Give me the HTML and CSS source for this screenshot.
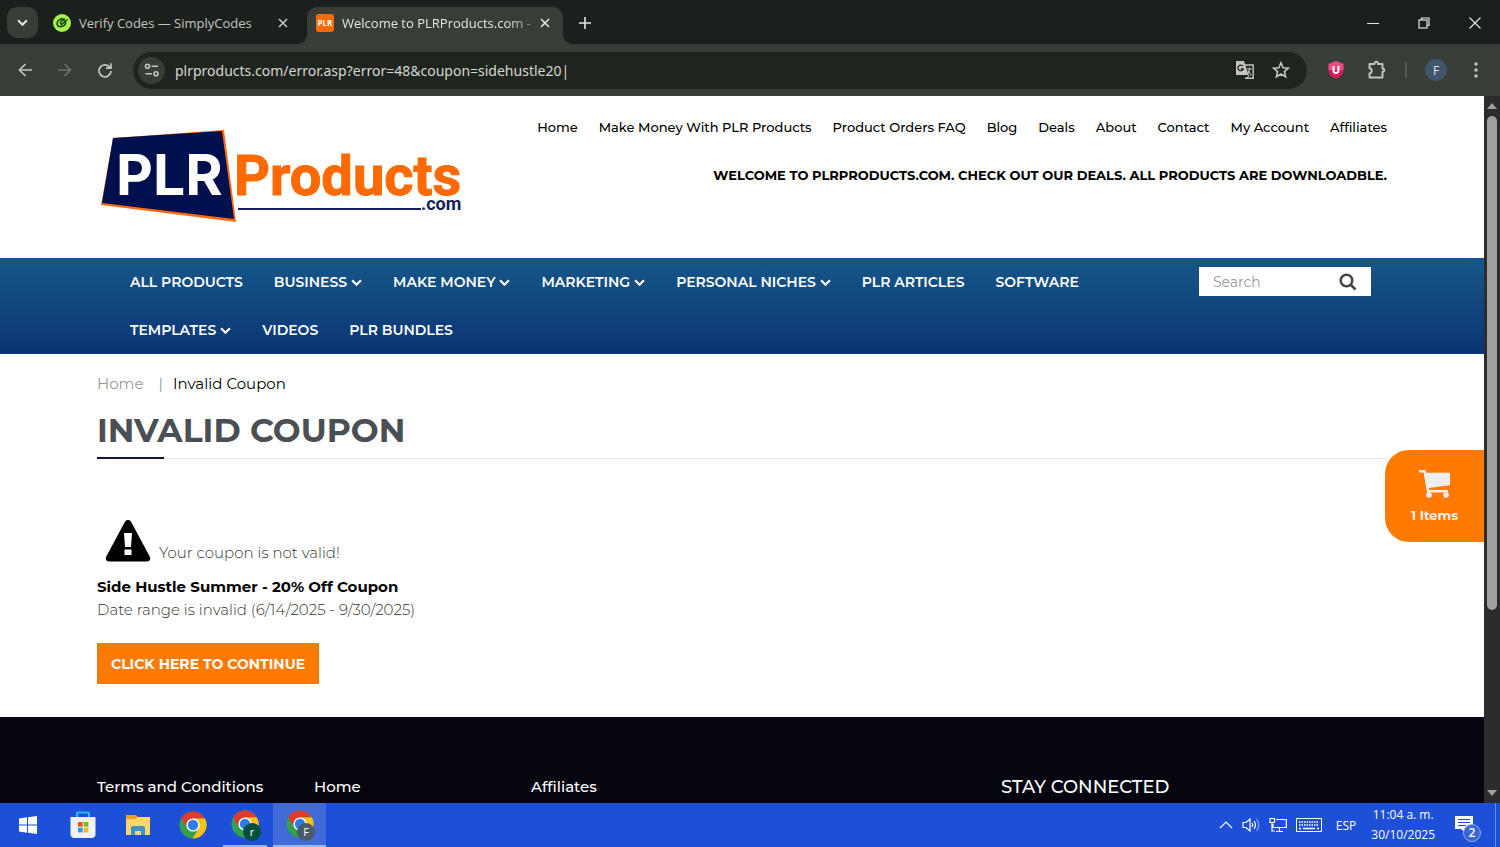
FILE: index.html
```html
<!DOCTYPE html>
<html lang="en">
<head>
    <meta charset="UTF-8">
    <meta name="viewport" content="width=device-width, initial-scale=1.0">
    <title>Welcome to PLRProducts.com</title>
    <link rel="stylesheet" href="styles.css">
</head>
<body>
    <!-- shared shapes -->
    <svg class="defs" width="0" height="0" aria-hidden="true">
        <symbol id="chevron" viewBox="0 0 10 8">
            <path d="M1 2l4 4 4-4" fill="none" stroke="currentColor" stroke-width="2"/>
        </symbol>
        <symbol id="close" viewBox="0 0 12 12">
            <path d="M2 2l8 8M10 2l-8 8" fill="none" stroke="currentColor" stroke-width="1.6"/>
        </symbol>
        <symbol id="chrome" viewBox="0 0 28 28">
            <circle cx="14" cy="14" r="13.5" fill="#34a24c"/>
            <path d="M2.3 7.3A13.5 13.5 0 0 1 25.7 7.3L14 7.6 8.2 17.3z" fill="#de3a2e"/>
            <path d="M14 7.6h11.9A13.5 13.5 0 0 1 13.6 27.5L19.8 17.3z" fill="#fbc116"/>
            <circle cx="14" cy="14" r="6.6" fill="#fff"/>
            <circle cx="14" cy="14" r="5.2" fill="#2f7de9"/>
        </symbol>
    </svg>

    <div class="tab-strip">
        <button class="tab-search" aria-label="Search tabs"><svg width="11" height="9"><use href="#chevron"/></svg></button>
        <div class="tab">
            <svg class="favicon" viewBox="0 0 18 18">
                <circle cx="9" cy="9" r="9" fill="#a3f34b"/>
                <path d="M12 5.500C8 3.500 4 6.500 4 9.500c0 3 3 3.800 5.500 2.800 2-.8 3.300-2.800 3-4.300M7 9l1.500 1.500L14.500 5.500M7 9c1-2 3-3 4.500-2.500" fill="none" stroke="#1b3a12" stroke-width="1.500"/>
            </svg>
            <span class="tab-title">Verify Codes — SimplyCodes</span>
            <button class="tab-close" aria-label="Close tab"><svg width="12" height="12"><use href="#close"/></svg></button>
        </div>
        <div class="tab tab-active">
            <span class="favicon favicon-plr">PLR</span>
            <span class="tab-title tab-fade">Welcome to PLRProducts.com -</span>
            <button class="tab-close" aria-label="Close tab"><svg width="12" height="12"><use href="#close"/></svg></button>
        </div>
        <button class="new-tab" aria-label="New tab"><svg width="12" height="12" viewBox="0 0 12 12"><path d="M6 0v12M0 6h12" stroke="currentColor" stroke-width="1.600"/></svg></button>
        <div class="window-buttons">
            <button aria-label="Minimize"><svg width="12" height="12" viewBox="0 0 12 12"><path d="M0 6.500h12" stroke="currentColor"/></svg></button>
            <button aria-label="Restore"><svg width="12" height="12" viewBox="0 0 12 12" fill="none" stroke="currentColor" stroke-width="1.200"><rect x="1" y="3" width="8" height="8"/><path d="M3.500 3V1H11v7.500H9"/></svg></button>
            <button aria-label="Close"><svg width="12" height="12" viewBox="0 0 12 12"><path d="M.5.500l11 11M11.500.500l-11 11" stroke="currentColor" stroke-width="1.200"/></svg></button>
        </div>
    </div>

    <div class="toolbar">
        <button aria-label="Back"><svg width="14" height="14" viewBox="0 0 14 14" fill="none" stroke="currentColor" stroke-width="1.700"><path d="M14 7H1.500M7.500 1L1.500 7l6 6"/></svg></button>
        <button class="disabled" aria-label="Forward"><svg width="14" height="14" viewBox="0 0 14 14" fill="none" stroke="currentColor" stroke-width="1.700"><path d="M0 7h12.500M6.500 1l6 6-6 6"/></svg></button>
        <button aria-label="Reload"><svg width="16" height="16" viewBox="0 0 16 16" fill="none" stroke="currentColor" stroke-width="1.700"><path d="M13 5.500A6 6 0 1 0 14 9M14 1.200v5H9"/></svg></button>
        <div class="omnibox">
            <button class="site-info" aria-label="Site information">
                <svg width="16" height="14" viewBox="0 0 16 14" fill="none" stroke="currentColor" stroke-width="1.600"><circle cx="3.500" cy="3.300" r="2"/><path d="M7.500 3.300H14M1.500 10.700H8"/><circle cx="12" cy="10.700" r="2"/></svg>
            </button>
            <span class="url"><label class="sr-only" for="address">Address</label><input id="address" type="text" value="plrproducts.com/error.asp?error=48&amp;coupon=sidehustle20|"></span>
            <button aria-label="Translate">
                <svg width="20" height="20" viewBox="0 0 20 20"><path d="M9 5h9.200v13.300H10" fill="none" stroke="#c3c6c0" stroke-width="1.400"/><path d="M1 1h8l4.500 14H1z" fill="#c3c6c0"/><path d="M8 6.200A2.800 2.800 0 1 0 8.300 9H5.800" fill="none" stroke="#20241f" stroke-width="1.300"/><path d="M12 9h5M14.500 7.500V9c0 2-1 4-2 5M13 11l3.500 4.500M14 15l-2 3.500" fill="none" stroke="#c3c6c0" stroke-width="1.100"/></svg>
            </button>
            <button aria-label="Bookmark this tab">
                <svg width="18" height="18" viewBox="0 0 18 18"><path d="M9 1.800l2.100 4.900 5.300.4-4 3.500 1.200 5.200L9 13l-4.600 2.800 1.200-5.200-4-3.500 5.300-.4z" fill="none" stroke="currentColor" stroke-width="1.600"/></svg>
            </button>
        </div>
        <div class="extensions">
            <button class="blocker" aria-label="uBlock">
                <svg width="16" height="18" viewBox="0 0 16 18"><path d="M8 0l7.500 3v6c0 4-3 7-7.500 9C3.500 16 .5 13 .5 9V3z" fill="#d81b60"/><path d="M8 0l7.500 3v6H.5V3z" fill="#f06292" opacity=".7"/><path d="M5.500 5v4.500a2.500 2.500 0 0 0 5 0V5" fill="none" stroke="#fff" stroke-width="1.900"/></svg>
            </button>
            <button aria-label="Extensions">
                <svg width="20" height="20" viewBox="0 0 20 20" fill="none" stroke="currentColor" stroke-width="1.900" stroke-linejoin="round"><path d="M2.500 4h5c0-3 3.500-3 3.500 0h4.500v4.500c2.500.3 2.500 3 0 3.300v5.700h-13v-4c3-.3 3-5 0-5.300z"/></svg>
            </button>
            <span class="divider"></span>
            <button class="profile" aria-label="Profile">F</button>
            <button aria-label="Menu"><svg width="4" height="16" viewBox="0 0 4 16" fill="currentColor"><circle cx="2" cy="2" r="1.700"/><circle cx="2" cy="8" r="1.700"/><circle cx="2" cy="14" r="1.700"/></svg></button>
        </div>
    </div>

    <div class="viewport">
        <div class="site">
            <header class="container site-header">
                <a class="logo" href="#" aria-label="PLR Products">
                    <svg width="364" height="94" viewBox="0 0 364 94">
                        <path d="M12 9L123 1l12 92L0 76z" fill="#ff6a13"/>
                        <path d="M12 9L121 2l12 88L1 74z" fill="#00104f"/>
                        <text class="logo-plr" x="15" y="66">PLR</text>
                        <text class="logo-products" x="133" y="66">Products</text>
                        <path d="M137 80h183" stroke="#14205c" stroke-width="2"/>
                        <text class="logo-com" x="320" y="81">.com</text>
                    </svg>
                </a>
                <div class="header-right">
                    <nav class="top-links">
                        <a href="#">Home</a>
                        <a href="#">Make Money With PLR Products</a>
                        <a href="#">Product Orders FAQ</a>
                        <a href="#">Blog</a>
                        <a href="#">Deals</a>
                        <a href="#">About</a>
                        <a href="#">Contact</a>
                        <a href="#">My Account</a>
                        <a href="#">Affiliates</a>
                    </nav>
                    <p class="welcome">WELCOME TO PLRPRODUCTS.COM. CHECK OUT OUR DEALS. ALL PRODUCTS ARE DOWNLOADBLE.</p>
                </div>
            </header>

            <div class="main-nav">
                <div class="container nav-inner">
                    <nav class="categories">
                        <a href="#">ALL PRODUCTS</a>
                        <a href="#">BUSINESS <svg width="11" height="9"><use href="#chevron"/></svg></a>
                        <a href="#">MAKE MONEY <svg width="11" height="9"><use href="#chevron"/></svg></a>
                        <a href="#">MARKETING <svg width="11" height="9"><use href="#chevron"/></svg></a>
                        <a href="#">PERSONAL NICHES <svg width="11" height="9"><use href="#chevron"/></svg></a>
                        <a href="#">PLR ARTICLES</a>
                        <a href="#">SOFTWARE</a>
                        <a href="#">TEMPLATES <svg width="11" height="9"><use href="#chevron"/></svg></a>
                        <a href="#">VIDEOS</a>
                        <a href="#">PLR BUNDLES</a>
                    </nav>
                    <form class="search">
                        <label class="sr-only" for="search">Search</label>
                        <input id="search" type="text" placeholder="Search">
                        <button type="button" aria-label="Search"><svg width="18" height="18" viewBox="0 0 18 18" fill="none" stroke="#444" stroke-width="2.500"><circle cx="7.500" cy="7.500" r="5.800"/><path d="M11.500 11.500l5 5"/></svg></button>
                    </form>
                </div>
            </div>

            <main class="container">
                <div class="breadcrumb"><a href="#">Home</a><span class="sep">|</span><span>Invalid Coupon</span></div>
                <h1>INVALID COUPON</h1>
                <div class="message">
                    <svg width="46" height="42" viewBox="0 0 46 42"><path d="M19.800 2c1.500-2.600 4.900-2.600 6.400 0l18.500 34.500c1.300 2.500 0 5-3 5H4.300c-3 0-4.300-2.500-3-5z"/><path d="M19 13h8l-1 14h-6zM19.500 29.500h7V35h-7z" fill="#fff"/></svg>
                    <span>Your coupon is not valid!</span>
                </div>
                <p class="coupon-name">Side Hustle Summer - 20% Off Coupon</p>
                <p class="coupon-info">Date range is invalid (6/14/2025 - 9/30/2025)</p>
                <button class="continue">CLICK HERE TO CONTINUE</button>
            </main>

            <footer>
                <div class="container footer-columns">
                    <a href="#">Terms and Conditions</a>
                    <a href="#">Home</a>
                    <a href="#">Affiliates</a>
                    <h2>STAY CONNECTED</h2>
                </div>
            </footer>

            <a class="cart" href="#">
                <svg width="32" height="28" viewBox="0 0 32 28" fill="#eee"><path d="M0 0h6.500l1 2.800H31v12.500L10 18l.5 2H29v2.600H8L7 17 4.600 2.600H0z"/><circle cx="10" cy="25" r="2.800"/><circle cx="27" cy="25" r="2.800"/></svg>
                <span>1 Items</span>
            </a>
        </div>
        <div class="scrollbar">
            <svg width="10" height="6" viewBox="0 0 10 6"><path d="M0 6l5-6 5 6z" fill="#9f9f9f"/></svg>
            <div class="track"><div class="thumb"></div></div>
            <svg width="10" height="6" viewBox="0 0 10 6"><path d="M0 0l5 6 5-6z" fill="#9f9f9f"/></svg>
        </div>
    </div>

    <div class="taskbar">
        <button aria-label="Start"><svg width="18" height="18" viewBox="0 0 18 18" fill="#fff"><path d="M0 2.500l8-1.200v7.300H0zM9 1.200L18 0v8.600H9zM0 9.500h8v7.300l-8-1.200zM9 9.500h9V18l-9-1.200z"/></svg></button>
        <button aria-label="Store">
            <svg width="26" height="28" viewBox="0 0 26 28"><path d="M7 7V2.500Q7 1.500 8 1.500h10q1 0 1 1V7" fill="none" stroke="#26b7f5" stroke-width="2.200"/><path d="M.5 6h25v17q0 4-4 4h-17q-4 0-4-4z" fill="#f2f2f2"/><path d="M8 11h4.700v4.700H8z" fill="#e8502a"/><path d="M13.700 11h4.700v4.700h-4.700z" fill="#7cb82f"/><path d="M8 16.700h4.700v4.700H8z" fill="#2b9fe6"/><path d="M13.700 16.700h4.700v4.700h-4.700z" fill="#fbb615"/></svg>
        </button>
        <button aria-label="File Explorer">
            <svg width="24" height="20" viewBox="0 0 24 20"><path d="M0 0h10l2 2h12v18H0z" fill="#e5a320"/><path d="M0 4h9l3-2h12v18H0z" fill="#ffd768"/><path d="M5 20v-7q0-2 2-2h10q2 0 2 2v7h-4v-4H9v4z" fill="#3f93cc"/></svg>
        </button>
        <button aria-label="Chrome"><svg width="28" height="28"><use href="#chrome"/></svg></button>
        <button class="running" aria-label="Chrome, profile r"><svg width="28" height="28"><use href="#chrome"/></svg><span class="badge badge-green">r</span></button>
        <button class="running focused" aria-label="Chrome, profile F"><svg width="28" height="28"><use href="#chrome"/></svg><span class="badge">F</span></button>

        <div class="tray">
            <svg width="14" height="8" viewBox="0 0 14 8" fill="none" stroke="#fff" stroke-width="1.200"><path d="M1 7l6-6 6 6"/></svg>
            <svg width="18" height="14" viewBox="0 0 18 14" fill="none" stroke="#fff" stroke-width="1.200"><path d="M1 4.500h3l4-3.500v12L4 9.500H1zM10 5q1.500 2 0 4M12 3q3 4 0 8"/><path d="M14.500 1q4.500 6 0 12" opacity=".5"/></svg>
            <svg width="18" height="16" viewBox="0 0 18 16" fill="none" stroke="#fff" stroke-width="1.200"><path d="M7 2.500h10.300v8H4V7M10.500 10.500V14M7 14.500h7M1 1.500h4.500v4H1zM3 5.500V14h3"/></svg>
            <svg width="26" height="14" viewBox="0 0 26 14" fill="none" stroke="#fff"><rect x=".5" y=".5" width="25" height="13"/><path d="M3 4h20M3 7h20" stroke-width="1.500" stroke-dasharray="1.500 1"/><path d="M3 10.500h2M7 10.500h12M21 10.500h2" stroke-width="1.500"/></svg>
            <span class="lang">ESP</span>
            <div class="clock"><span>11:04 a. m.</span><span>30/10/2025</span></div>
            <button class="notifications" aria-label="Notifications"><svg width="18" height="18" viewBox="0 0 18 18"><path d="M0 0h18v13h-8v4l-4-4H0z" fill="#fff"/><path d="M3 3.500h12M3 6.500h12M3 9.500h8" stroke="#1d4fd7" stroke-width="1.200"/></svg><span class="count">2</span></button>
        </div>
    </div>
</body>
</html>
```
FILE: styles.css
```css
* {
    box-sizing: border-box;
}

body {
    margin: 0;
    height: 100vh;
    display: flex;
    flex-direction: column;
    overflow: hidden;
    font-family: "Open Sans", sans-serif;
    font-size: 13px;
    background-color: #1c201c;
}

button {
    padding: 0;
    border: none;
    background: none;
    color: inherit;
    font-family: inherit;
    cursor: pointer;
}

svg {
    display: block;
    flex-shrink: 0;
}

a {
    color: inherit;
    text-decoration: none;
}

.defs {
    position: absolute;
}

.sr-only {
    position: absolute;
    width: 1px;
    height: 1px;
    overflow: hidden;
    clip-path: inset(50%);
}

/* browser tabs */
.tab-strip {
    display: flex;
    align-items: center;
    height: 44px;
    flex-shrink: 0;
    padding: 1px 0 0 7px;
    background-color: #1c201c;
    color: #e3e5e0;
}

.tab-search {
    display: grid;
    place-items: center;
    width: 31px;
    height: 31px;
    border-radius: 10px;
    background-color: #393d37;
}

.tab {
    display: flex;
    align-items: center;
    width: 256px;
    height: 37px;
    margin-left: 5px;
    padding: 0 10px;
    color: #c3c6c0;
}

.tab-active {
    position: relative;
    align-self: flex-end;
    margin-left: 8px;
    padding: 0 12px 6px 9px;
    border-radius: 10px 10px 0 0;
    background-color: #393d37;
    color: #e3e5e0;
}

/* the curved feet of the active tab */
.tab-active::before,
.tab-active::after {
    content: "";
    position: absolute;
    bottom: 0;
    width: 10px;
    height: 10px;
}

.tab-active::before {
    right: 100%;
    background: radial-gradient(circle at 0 0, transparent 10px, #393d37 10px);
}

.tab-active::after {
    left: 100%;
    background: radial-gradient(circle at 100% 0, transparent 10px, #393d37 10px);
}

.favicon {
    width: 18px;
    height: 18px;
    flex-shrink: 0;
}

.favicon-plr {
    border-radius: 3px;
    background-color: #ff6a00;
    color: #fff;
    font-size: 8px;
    font-weight: 700;
    line-height: 18px;
    text-align: center;
}

.tab-title {
    flex: 1;
    margin-left: 8px;
    white-space: nowrap;
}

.tab-fade {
    mask-image: linear-gradient(to right, #000 165px, transparent 205px);
}

.tab-close {
    margin-left: 3px;
}

.new-tab {
    margin-left: 16px;
}

.window-buttons {
    display: flex;
    margin-left: auto;
}

.window-buttons button {
    display: grid;
    place-items: center;
    width: 51px;
    height: 43px;
}

/* address bar */
.toolbar {
    display: flex;
    align-items: center;
    height: 52px;
    flex-shrink: 0;
    padding: 0 22px 0 17px;
    background-color: #393d37;
    color: #c3c6c0;
}

.toolbar > button {
    display: grid;
    place-items: center;
    width: 16px;
    margin-right: 24px;
}

.toolbar .disabled {
    color: #71746e;
}

.omnibox {
    flex: 1;
    display: flex;
    align-items: center;
    gap: 17px;
    height: 37px;
    margin-left: -4px;
    padding: 0 17px 0 5px;
    border-radius: 19px;
    background-color: #20241f;
}

.site-info {
    display: grid;
    place-items: center;
    width: 27px;
    height: 27px;
    border-radius: 50%;
    background-color: #393d37;
}

.url {
    flex: 1;
    margin-left: -8px;
}

.url input {
    width: 100%;
    height: 28px;
    padding: 0 1px;
    border: none;
    outline: none;
    background: none;
    color: #d5d8d1;
    font-family: "Noto Sans", sans-serif;
    font-size: 14px;
}

.extensions {
    display: flex;
    align-items: center;
    gap: 18px;
    margin-left: 21px;
}

.blocker {
    margin-right: 5px;
}

.divider {
    width: 2px;
    height: 16px;
    background-color: #555a53;
}

.profile {
    width: 22px;
    height: 22px;
    margin-right: 9px;
    border-radius: 50%;
    background-color: #40566a;
    color: #e3e5e0;
    font-size: 12px;
}

/* page */
.viewport {
    flex: 1;
    display: flex;
    min-height: 0;
}

.site {
    position: relative;
    flex: 1;
    overflow: hidden;
    background-color: #fff;
    font-family: Montserrat, Inter, sans-serif;
    color: #000;
}

.container {
    padding: 0 97px;
}

.site-header {
    display: flex;
    justify-content: space-between;
    height: 162px;
}

.logo {
    margin: 33px 0 0 4px;
}

.logo-plr {
    font: 700 57px Inter, sans-serif;
    fill: #fff;
}

.logo-products {
    font: 700 56px Roboto, sans-serif;
    fill: #ff6a00;
    stroke: #ff6a00;
}

.logo-com {
    font: 700 18px Roboto, sans-serif;
    fill: #14205c;
}

.header-right {
    padding-top: 21px;
    text-align: right;
}

.top-links {
    display: flex;
    justify-content: flex-end;
    gap: 21px;
    font-size: 13px;
    font-weight: 500;
    line-height: 20px;
}

.welcome {
    margin: 28px 0 0;
    font-size: 13px;
    font-weight: 700;
    line-height: 20px;
}

.main-nav {
    height: 96px;
    background: linear-gradient(#175788, #0a3474);
    color: #fff;
}

.nav-inner {
    display: flex;
    justify-content: space-between;
}

.categories {
    display: flex;
    flex-wrap: wrap;
    gap: 0 31px;
    width: 1000px;
    padding-left: 33px;
    font-size: 14px;
    font-weight: 600;
    line-height: 48px;
}

.categories a {
    display: flex;
    align-items: center;
    gap: 4px;
}

.search {
    display: flex;
    align-items: center;
    width: 172px;
    height: 29px;
    margin: 9px 16px 0 0;
    padding: 0 14px;
    background-color: #fff;
}

.search input {
    flex: 1;
    min-width: 0;
    height: 28px;
    padding: 0;
    border: none;
    outline: none;
    background: none;
    font-family: inherit;
    font-size: 14px;
}

.search input::placeholder {
    color: #999;
}

.breadcrumb {
    padding-top: 20px;
    font-size: 15px;
    line-height: 20px;
}

.breadcrumb a {
    color: #999;
}

.breadcrumb .sep {
    margin: 0 10px 0 15px;
    color: #999;
}

h1 {
    position: relative;
    margin: 13px 0 61px;
    padding-bottom: 5px;
    border-bottom: 1px solid #e5e5e5;
    color: #4a4f54;
    font-size: 33px;
    font-weight: 700;
    line-height: 46px;
}

h1::after {
    content: "";
    position: absolute;
    left: 0;
    bottom: -1px;
    width: 67px;
    height: 2px;
    background-color: #14143c;
}

.message {
    display: flex;
    align-items: flex-end;
    gap: 8px;
    padding-left: 8px;
    color: #333;
    font-size: 15px;
    font-weight: 300;
    line-height: 19px;
}

.message svg {
    fill: #000;
}

.coupon-name,
.coupon-info {
    margin: 0;
    font-size: 15px;
    line-height: 23px;
}

.coupon-name {
    margin-top: 13px;
    font-weight: 700;
}

.coupon-info {
    color: #333;
    font-weight: 300;
}

.continue {
    height: 41px;
    margin: 22px 0 33px;
    padding: 0 14px;
    background-color: #ff7a00;
    color: #fff;
    font-size: 14px;
    font-weight: 700;
}

footer {
    height: 400px;
    padding-top: 58px;
    background-color: #05050f;
    color: #fff;
}

.footer-columns {
    display: grid;
    grid-template-columns: 217px 217px 470px 1fr;
    font-size: 15px;
    font-weight: 500;
    line-height: 24px;
}

.footer-columns h2 {
    margin: 0;
    font-size: 18px;
    font-weight: 500;
}

.cart {
    position: absolute;
    top: 354px;
    right: 0;
    display: flex;
    flex-direction: column;
    align-items: center;
    gap: 9px;
    width: 99px;
    height: 92px;
    padding-top: 20px;
    border-radius: 24px 0 0 24px;
    background-color: #ff7a00;
    color: #eee;
    font-size: 13px;
    font-weight: 700;
}

.scrollbar {
    display: flex;
    flex-direction: column;
    align-items: center;
    width: 16px;
    padding: 7px 0;
    background-color: #2c2c2c;
}

.track {
    flex: 1;
    width: 10px;
    margin: 7px 0;
}

.thumb {
    height: 74%;
    border-radius: 5px;
    background-color: #9f9f9f;
}

/* taskbar */
.taskbar {
    display: flex;
    height: 44px;
    flex-shrink: 0;
    background-color: #1d4fd7;
    color: #fff;
}

.taskbar > button {
    position: relative;
    display: grid;
    place-items: center;
    width: 55px;
}

.running {
    border-bottom: 2px solid #93b8f5;
}

.taskbar > .running {
    width: 44px;
    margin: 0 6px 0 3px;
}

.taskbar > .focused {
    width: 53px;
    margin: 0;
    background-color: #416ad8;
}

.badge {
    position: absolute;
    right: 6px;
    bottom: 4px;
    width: 18px;
    height: 18px;
    border-radius: 50%;
    background-color: #4a5a66;
    font-size: 11px;
    line-height: 18px;
}

.focused .badge {
    right: 11px;
}

.badge-green {
    background-color: #04503c;
}

.tray {
    display: flex;
    align-items: center;
    gap: 9px;
    margin: 0 4px 0 auto;
    padding-right: 22px;
    border-right: 1px solid #6d8fe6;
    font-size: 12px;
}

.lang {
    margin-left: 5px;
}

.clock {
    display: flex;
    flex-direction: column;
    align-items: center;
    margin-left: 6px;
    line-height: 20px;
}

.notifications {
    position: relative;
    margin-left: 11px;
}

.count {
    position: absolute;
    left: 8px;
    top: 8px;
    width: 18px;
    height: 18px;
    border: 1px solid #8fabf0;
    border-radius: 50%;
    background-color: #3b66d8;
    font-size: 12px;
    font-weight: 600;
    line-height: 16px;
}
```
